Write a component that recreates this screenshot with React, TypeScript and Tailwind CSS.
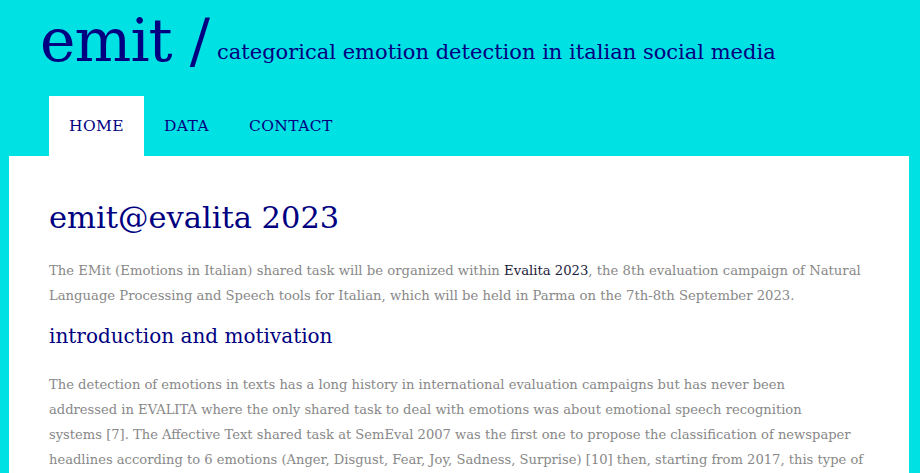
const serif = "font-['DejaVu_Serif',serif]";

function NavItem({ label, active = false }: { label: string; active?: boolean }) {
  return (
    <a
      href="#"
      className={
        active
          ? "flex h-[60px] items-center bg-white px-5 pt-0.5 text-[15.5px] tracking-wide text-[#000080]"
          : "flex h-[60px] items-center px-5 pt-0.5 text-[15.5px] tracking-wide text-[#000080]"
      }
    >
      {label}
    </a>
  );
}

export default function App() {
  return (
    <div className={`min-h-[473px] overflow-hidden bg-[#00e1e4] ${serif}`}>
      {/* Cabecera */}
      <header className="flex items-baseline gap-2 pl-10 pt-1">
        <span className="text-[60px] leading-[72px] tracking-[-1px] text-[#000080]">emit /</span>
        <span className="relative -top-0.5 text-[21px] text-[#000080]">
          categorical emotion detection in italian social media
        </span>
      </header>

      <nav className="mt-5 flex pl-[49px]">
        <NavItem label="HOME" active />
        <NavItem label="DATA" />
        <NavItem label="CONTACT" />
      </nav>

      {/* Contenido */}
      <main className="ml-[9px] mr-[11px] bg-white px-10 pb-10 pt-10">
        <h1 className="text-[30.5px] leading-[44px] text-[#000080]">emit@evalita 2023</h1>
        <p className="mt-[18px] whitespace-nowrap text-[13.2px] leading-[25px] text-[#888]">
          The EMit (Emotions in Italian) shared task will be organized within{" "}
          <a href="#" className="text-[#1c1c3c]">Evalita 2023</a>, the 8th evaluation campaign of Natural
          <br />
          Language Processing and Speech tools for Italian, which will be held in Parma on the 7th-8th September 2023.
        </p>
        <h2 className="mt-[11px] text-[20px] leading-[34px] text-[#000080]">introduction and motivation</h2>
        <p className="mt-[19px] whitespace-nowrap text-[13.1px] leading-[25px] text-[#888]">
          The detection of emotions in texts has a long history in international evaluation campaigns but has never been
          <br />
          addressed in EVALITA where the only shared task to deal with emotions was about emotional speech recognition
          <br />
          systems [7]. The Affective Text shared task at SemEval 2007 was the first one to propose the classification of newspaper
          <br />
          headlines according to 6 emotions (Anger, Disgust, Fear, Joy, Sadness, Surprise) [10] then, starting from 2017, this type of
          <br />
          task has been proposed again at SemEval with the Emotion Intensity shared task and, later, with Affect in Tweets.
        </p>
      </main>
    </div>
  );
}
